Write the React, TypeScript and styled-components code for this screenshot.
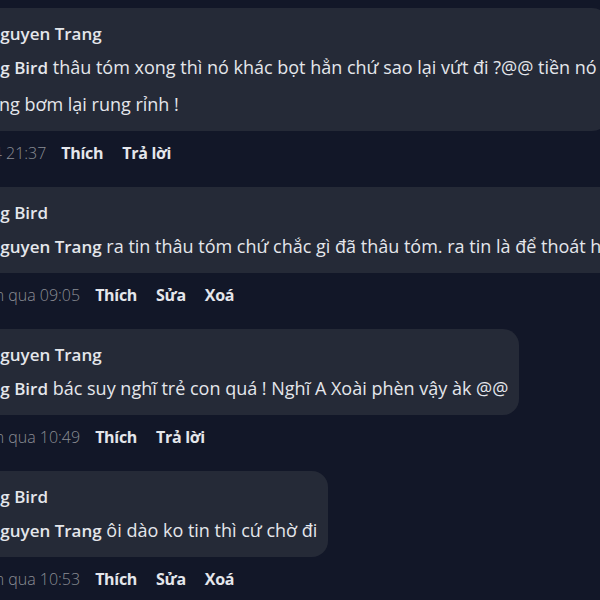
import React from "react";
import styled, { createGlobalStyle } from "styled-components";

const Global = createGlobalStyle`
  html, body {
    margin: 0;
    padding: 0;
    background: #121728;
    overflow: hidden;
  }
  body {
    font-family: "Open Sans", "Noto Sans", sans-serif;
    color: #e4e6eb;
    -webkit-font-smoothing: antialiased;
  }
`;

const Thread = styled.div`
  display: flex;
  flex-direction: column;
  gap: 18px;
  padding-top: 8px;
  margin-left: -31px;
  width: 800px;
`;

const Comment = styled.div`
  display: flex;
  flex-direction: column;
  align-items: flex-start;
`;

const Bubble = styled.div`
  background: #252a37;
  border-radius: 16px;
  padding: 11px 11px 8px 18px;
  max-width: 760px;
  box-sizing: border-box;
`;

const Author = styled.div`
  font-size: 17px;
  font-weight: 600;
  line-height: 30px;
  white-space: nowrap;
`;

const Body = styled.div`
  font-size: 18px;
  font-weight: 400;
  line-height: 37px;
  white-space: nowrap;
`;

const Mention = styled.span`
  font-size: 17px;
  font-weight: 600;
`;

const Actions = styled.div`
  display: flex;
  align-items: center;
  gap: 19px;
  margin-top: 6px;
  height: 32px;
  line-height: 32px;
  font-size: 16px;
`;

const Time = styled.span`
  color: #8a8d94;
  font-weight: 300;
  margin-right: -4px;
`;

const Action = styled.span`
  font-weight: 700;
  color: #e4e6eb;
  letter-spacing: -0.3px;
`;

type Item = {
  author: string;
  mention: string;
  lines: string[];
  time: string;
  actions: string[];
};

const items: Item[] = [
  {
    author: "Nguyen Trang",
    mention: "Ng Bird",
    lines: [
      "thâu tóm xong thì nó khác bọt hẳn chứ sao lại vứt đi ?@@ tiền nó",
      "ứng bơm lại rung rỉnh !",
    ],
    time: "12/4 21:37",
    actions: ["Thích", "Trả lời"],
  },
  {
    author: "Ng Bird",
    mention: "Nguyen Trang",
    lines: [
      "ra tin thâu tóm chứ chắc gì đã thâu tóm. ra tin là để thoát hàng thôi",
    ],
    time: "Hôm qua 09:05",
    actions: ["Thích", "Sửa", "Xoá"],
  },
  {
    author: "Nguyen Trang",
    mention: "Ng Bird",
    lines: ["bác suy nghĩ trẻ con quá ! Nghĩ A Xoài phèn vậy àk @@"],
    time: "Hôm qua 10:49",
    actions: ["Thích", "Trả lời"],
  },
  {
    author: "Ng Bird",
    mention: "Nguyen Trang",
    lines: ["ôi dào ko tin thì cứ chờ đi"],
    time: "Hôm qua 10:53",
    actions: ["Thích", "Sửa", "Xoá"],
  },
];

export default function App() {
  return (
    <>
      <Global />
      <Thread>
        {items.map((it, i) => (
          <Comment key={i}>
            <Bubble>
              <Author>{it.author}</Author>
              <Body>
                {it.lines.map((l, j) => (
                  <div key={j}>
                    {j === 0 && (
                      <>
                        <Mention>{it.mention}</Mention>{" "}
                      </>
                    )}
                    {l}
                  </div>
                ))}
              </Body>
            </Bubble>
            <Actions>
              <Time>{it.time}</Time>
              {it.actions.map((a) => (
                <Action key={a}>{a}</Action>
              ))}
            </Actions>
          </Comment>
        ))}
      </Thread>
    </>
  );
}
